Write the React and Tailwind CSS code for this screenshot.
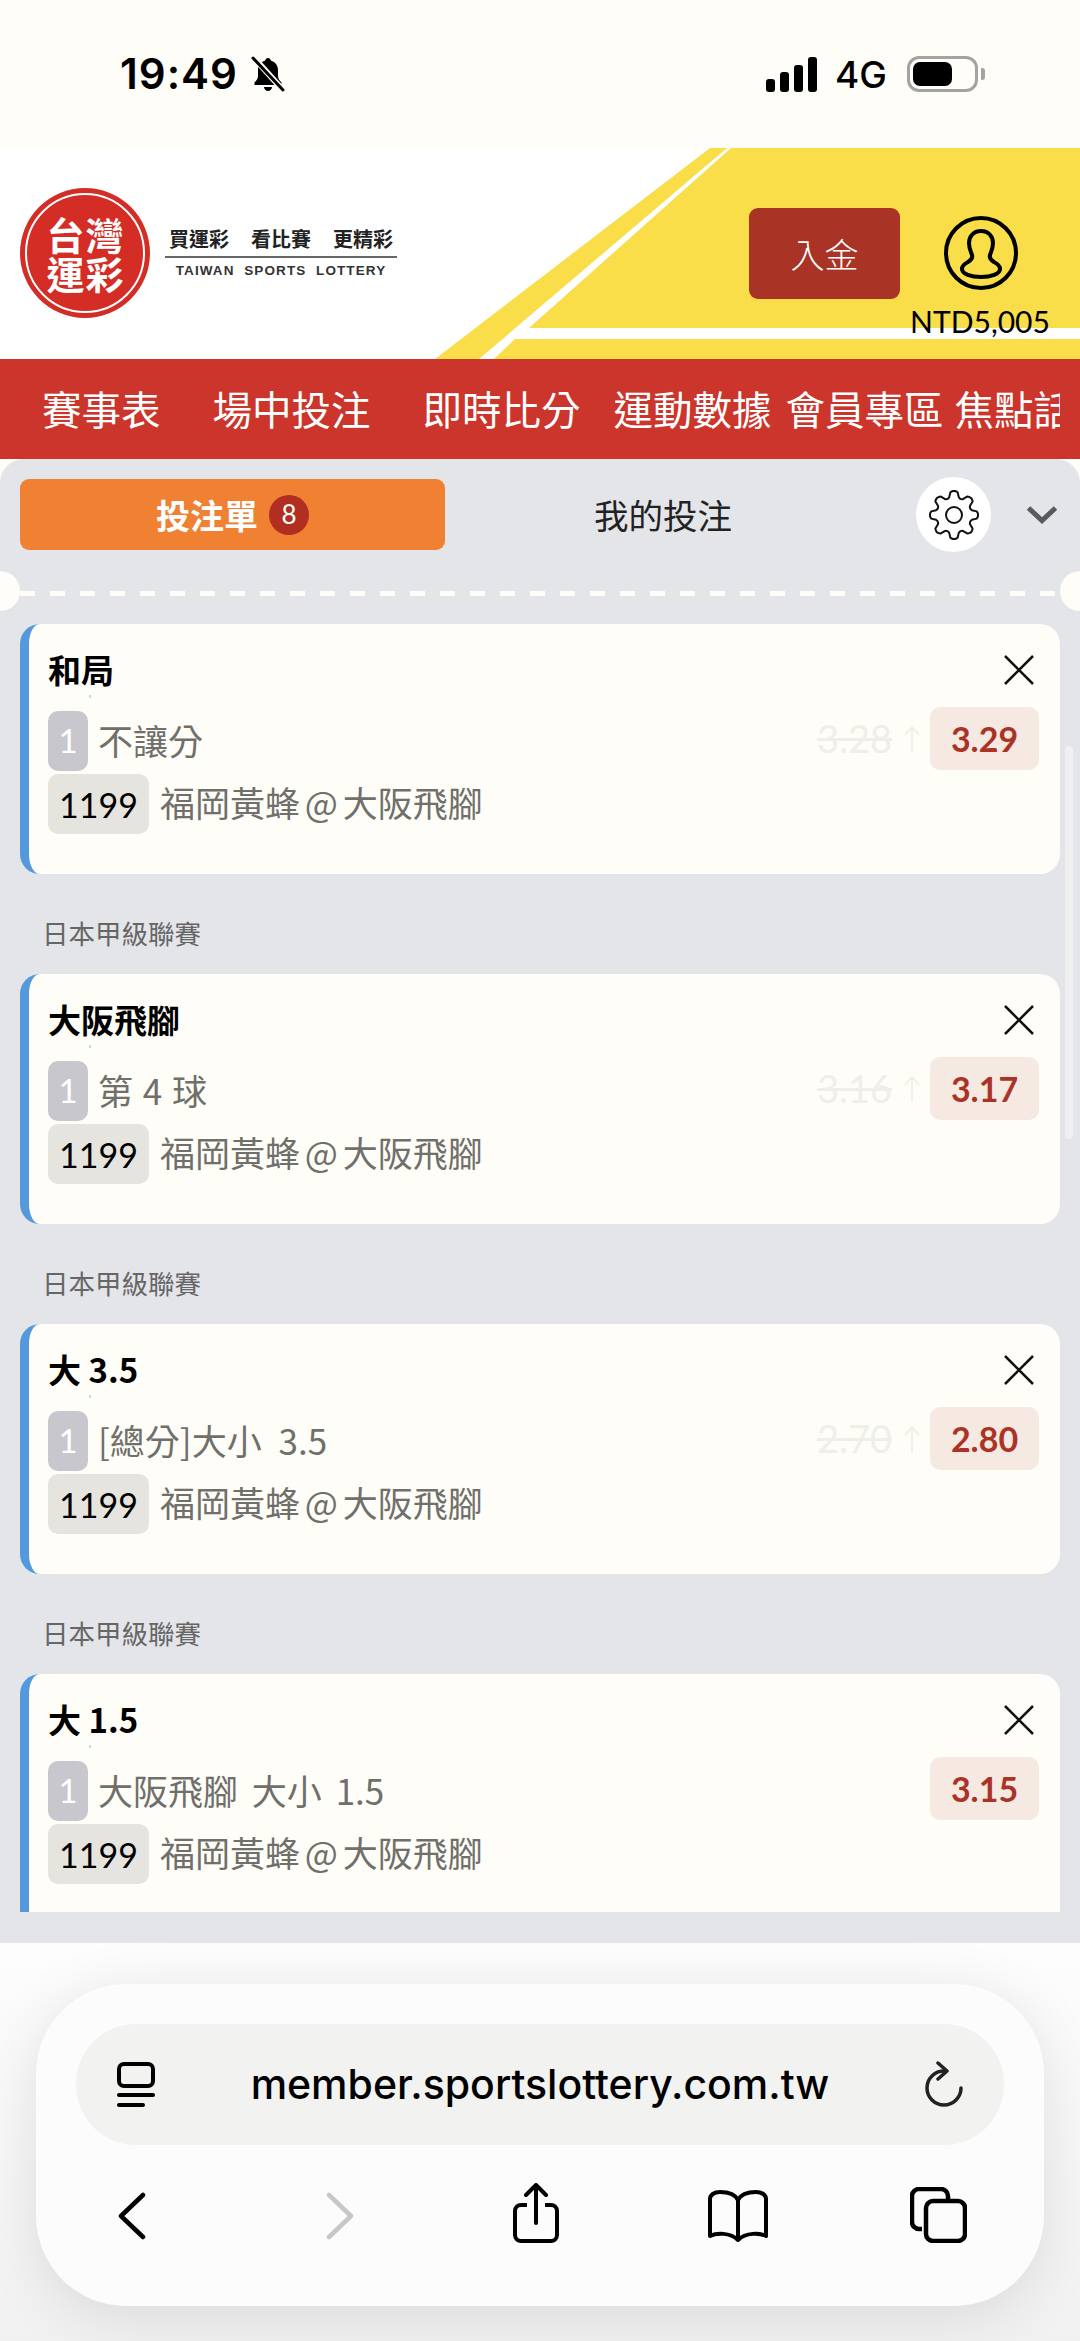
import { ChevronDown } from 'lucide-react';

const cards = [
    { title: '和局', label: '不讓分', oldOdds: '3.28', odds: '3.29', spacing: '' },
    { title: '大阪飛腳', label: '第 4 球', oldOdds: '3.16', odds: '3.17', spacing: '[word-spacing:2px]' },
    { title: '大 3.5', label: '[總分]大小 3.5', oldOdds: '2.70', odds: '2.80', spacing: '[word-spacing:9px]' },
    { title: '大 1.5', label: '大阪飛腳 大小 1.5', odds: '3.15', spacing: '[word-spacing:6px]' },
];

// 8 rounded teeth, same shape as the gear in the bet slip
const polar = (deg, r) => {
    const a = (deg * Math.PI) / 180;
    return `${(25 + r * Math.sin(a)).toFixed(2)} ${(25 - r * Math.cos(a)).toFixed(2)}`;
};
const gearPath = Array.from({ length: 8 }, (_, i) => {
    const t = i * 45;
    return `${i === 0 ? 'M' : 'L'}${polar(t - 15, 18.500)}L${polar(t - 9, 23)}Q${polar(t, 25.500)} ${polar(t + 9, 23)}L${polar(t + 15, 18.500)}Q${polar(t + 22.500, 16.500)} ${polar(t + 30, 18.500)}`;
}).join('') + 'Z';

const StatusBar = () => (
    <div className="h-[148px] shrink-0 relative flex items-center font-[Inter,sans-serif]">
        <div className="flex items-center ml-[120px]">
            <span className="text-[42px] leading-none font-semibold tracking-[1px] text-black">19:49</span>
            <svg width="36" height="38" viewBox="0 0 36 36" className="ml-[12px]">
                <path d="M18 2c1.600 0 2.600 1 2.800 2.400C25.500 5.800 28 9.500 28 14v6c0 2.500 1.500 4.500 3.500 6.500V29h-27v-2.500C6.500 24.500 8 22.500 8 20v-6c0-4.500 2.500-8.200 7.200-9.600C15.400 3 16.400 2 18 2z" fill="#000" />
                <path d="M14 31h8c0 2.200-1.800 4-4 4s-4-1.800-4-4z" fill="#000" />
                <path d="M5 3l27 30" stroke="#fffdf7" strokeWidth="6" />
                <path d="M3 2l30 32" stroke="#000" strokeWidth="3" strokeLinecap="round" />
            </svg>
        </div>
        <div className="ml-auto mr-[95px] flex items-center">
            <div className="flex items-end gap-[5px] h-[35px]">
                <div className="w-[9px] h-[13px] rounded-[3px] bg-black" />
                <div className="w-[9px] h-[20px] rounded-[3px] bg-black" />
                <div className="w-[9px] h-[27px] rounded-[3px] bg-black" />
                <div className="w-[9px] h-[35px] rounded-[3px] bg-black" />
            </div>
            <span className="ml-[18px] text-[37px] leading-none font-medium text-black">4G</span>
            <div className="ml-[20px] w-[71px] h-[36px] rounded-[12px] border-[3px] border-[#a3a3a3] p-[3px]">
                <div className="w-[39px] h-full rounded-[7px] bg-black" />
            </div>
            <div className="ml-[3px] w-[4px] h-[12px] rounded-r-[3px] bg-[#a3a3a3]" />
        </div>
    </div>
);

const Logo = () => (
    <div className="flex items-center">
        <div className="w-[130px] h-[130px] rounded-full bg-[#d32d26] p-[5px] shrink-0">
            <div className="w-full h-full rounded-full border-2 border-white grid grid-cols-[39px_39px] content-center justify-center text-white font-bold text-[38px] leading-[39px] text-center">
                <span>台</span>
                <span>灣</span>
                <span>運</span>
                <span>彩</span>
            </div>
        </div>
        <div className="ml-[15px] w-[232px] flex flex-col items-center">
            <div className="text-[20px] leading-[24px] font-bold text-[#222] flex gap-[22px]">
                <span>買運彩</span>
                <span>看比賽</span>
                <span>更精彩</span>
            </div>
            <div className="w-full h-[2px] bg-[#666] mt-[5px]" />
            <div className="mt-[5px] text-[13.500px] leading-[16px] font-bold text-[#333] tracking-[1.100px] whitespace-pre font-['Liberation_Sans',sans-serif]">TAIWAN  SPORTS  LOTTERY</div>
        </div>
    </div>
);

const Header = () => (
    <div className="h-[211px] shrink-0 relative bg-white overflow-hidden flex items-center">
        <svg className="absolute inset-0" width="1080" height="211" viewBox="0 0 1080 211">
            <path d="M710 0H727L479 211H435z" fill="#f9dd49" />
            <path d="M731 0H1080V180H529z" fill="#f9dd49" />
            <path d="M515 191H1080V211H494z" fill="#f9dd49" />
        </svg>
        <div className="relative ml-[20px] -mt-[1px]">
            <Logo />
        </div>
        <div className="absolute left-[749px] top-[60px] w-[151px] h-[91px] rounded-[9px] bg-[#a93324] flex items-center justify-center text-white text-[34px] font-light">
            入金
        </div>
        <div className="absolute left-[906px] top-[68px] w-[150px] flex flex-col items-center">
            <svg width="74" height="74" viewBox="0 0 74 74" fill="none" stroke="#000" strokeWidth="4">
                <circle cx="37" cy="37" r="35" />
                <path d="M37 15c-8 0-12 6-12 12 0 6 2 9 3 12 1 3-1 5-4 7-4 2-6 4-6 7 0 5 9 8 19 8s19-3 19-8c0-3-2-5-6-7-3-2-5-4-4-7 1-3 3-6 3-12 0-6-4-12-12-12z" />
            </svg>
            <span className="mt-[15px] -ml-[2px] text-[30px] leading-[32px] text-black font-[Lato,sans-serif]">NTD5,005</span>
        </div>
    </div>
);

const Nav = () => (
    <div className="h-[100px] shrink-0 bg-[#cb352b] pb-[3px] pl-[42px]">
        <div className="w-[1018px] h-full overflow-hidden flex items-center whitespace-nowrap text-white text-[39.500px]">
            <span>賽事表</span>
            <span className="ml-[52px]">場中投注</span>
            <span className="ml-[52px]">即時比分</span>
            <span className="ml-[33px]">運動數據</span>
            <span className="ml-[14px]">會員專區</span>
            <span className="ml-[11px]">焦點話題</span>
        </div>
    </div>
);

const Tabs = () => (
    <div className="h-[71px] flex items-center pl-[20px]">
        <div className="w-[425px] h-full rounded-[9px] bg-[#f08132] flex items-center justify-center gap-[11px] text-white font-semibold text-[34px]">
            <span>投注單</span>
            <span className="w-[40px] h-[40px] rounded-full bg-[#b22e20] flex items-center justify-center text-[26px] font-normal font-[Lato,sans-serif]">8</span>
        </div>
        <div className="w-[436px] text-center text-[34.500px] text-[#222]">我的投注</div>
        <div className="ml-[35px] w-[75px] h-[75px] rounded-full bg-white flex items-center justify-center">
            <svg width="50" height="50" viewBox="0 0 50 50" fill="none" stroke="#111" strokeWidth="2" strokeLinejoin="round">
                <path d={gearPath} />
                <circle cx="25" cy="25" r="8" />
            </svg>
        </div>
        <svg width="30" height="18" viewBox="0 0 30 18" fill="none" stroke="#5a5a5a" strokeWidth="5" className="ml-[36px]">
            <path d="M1.500 2L15 14.500 28.500 2" />
        </svg>
    </div>
);

const Divider = () => (
    <div className="relative h-[40px] mt-[21px] flex items-center">
        <div className="absolute left-[-20px] top-0 w-[40px] h-[40px] rounded-full bg-[#fffdf7]" />
        <div className="absolute right-[-20px] top-0 w-[40px] h-[40px] rounded-full bg-[#fffdf7]" />
        <div className="absolute left-[20px] right-[20px] top-[20px] h-[5px] bg-[repeating-linear-gradient(90deg,#fffdf7_0_15px,transparent_15px_30px)]" />
    </div>
);

const BetCard = ({ card, last }) => (
    <div className={`relative mx-[20px] bg-[#fffdf7] border-l-[9px] border-[#5499dc] pl-[19px] pr-[21px] pt-[26px] ${last ? 'h-[238px] rounded-t-[20px] shrink-0' : 'h-[250px] rounded-[20px] shrink-0'}`}>
        <div className="h-[40px] flex items-center justify-between">
            <span className="text-[33px] font-bold text-black">{card.title}</span>
            <svg width="30" height="30" viewBox="0 0 30 30" className="mr-[5px]">
                <path d="M1 1l28 28M29 1L1 29" stroke="#111" strokeWidth="2.500" />
            </svg>
        </div>
        <div className="absolute left-[60px] top-[71px] w-[2px] h-[3px] bg-[#bcdcf5]" />
        <div className="mt-[17px] h-[63px] flex items-center">
            <span className="w-[40px] h-[60px] mt-[5px] rounded-[10px] bg-[#c7c7cd] text-white text-[33px] flex items-center justify-center shrink-0 font-[Lato,sans-serif]">1</span>
            <span className={`ml-[10px] text-[35px] text-[#6f6f6b] mt-[4px] ${card.spacing}`}>{card.label}</span>
            <div className="ml-auto flex items-center">
                {card.oldOdds && (
                    <>
                        <span className="text-[38px] text-[#efefea] line-through font-[Lato,sans-serif]">{card.oldOdds}</span>
                        <svg width="20" height="26" viewBox="0 0 20 26" className="ml-[10px] mr-[8px]" fill="none" stroke="#edf2e8" strokeWidth="2">
                            <path d="M10 26V1M3 9l7-8 7 8" />
                        </svg>
                    </>
                )}
                <span className="w-[109px] h-[63px] rounded-[10px] bg-[#f5e9e2] text-[#ab3326] font-bold text-[34px] flex items-center justify-center font-[Lato,sans-serif]">{card.odds}</span>
            </div>
        </div>
        <div className="mt-[4px] h-[60px] flex items-center">
            <span className="w-[101px] h-[60px] rounded-[10px] bg-[#e6e4df] text-black text-[34px] flex items-center justify-center shrink-0 font-[Lato,sans-serif]">1199</span>
            <span className="ml-[11px] -mt-[3px] text-[35px] text-[#6f6f6b] whitespace-nowrap [word-spacing:-3px]">福岡黃蜂 @ 大阪飛腳</span>
        </div>
    </div>
);

const BetList = () => (
    <div className="mt-[13px] flex flex-col relative">
        {cards.map((card, i) => (
            <div key={i} className="flex flex-col">
                <BetCard card={card} last={i === cards.length - 1} />
                {i < cards.length - 1 && (
                    <div className="h-[100px] pl-[42px] pt-[40px] text-[26.500px] leading-[38px] text-[#666]">日本甲級聯賽</div>
                )}
            </div>
        ))}
        <div className="absolute right-[7px] top-[122px] h-[393px] w-[8px] rounded-full bg-[#f0f0f0]" />
    </div>
);

const Panel = () => (
    <div className="h-[1484px] shrink-0 rounded-t-[24px] bg-[#e4e5e8] pt-[20px] overflow-hidden">
        <Tabs />
        <Divider />
        <BetList />
    </div>
);

const SafariBar = () => (
    <div className="flex-1 bg-gradient-to-b from-[#fdfdfd] to-[#f1f1f1] px-[36px] pt-[41px] font-[Inter,sans-serif]">
        <div className="h-[322px] rounded-[90px] bg-[#fcfcfc] shadow-[0_10px_60px_rgba(0,0,0,0.1)] px-[40px] pt-[40px]">
            <div className="h-[121px] rounded-[60px] bg-[#f2f2f0] flex items-center pl-[41px] pr-[41px]">
                <svg width="38" height="46" viewBox="0 0 38 46" fill="none" stroke="#000" strokeWidth="4">
                    <rect x="2" y="2" width="34" height="22" rx="5" />
                    <path d="M2 33H36" strokeLinecap="round" />
                    <path d="M2 43H26" strokeLinecap="round" />
                </svg>
                <span className="flex-1 text-center text-[41px] font-medium text-black">member.sportslottery.com.tw</span>
                <svg width="38" height="48" viewBox="0 0 38 48" fill="none" stroke="#222" strokeWidth="3.500" strokeLinecap="round" strokeLinejoin="round">
                    <path d="M19 10A17 17 0 1 0 36 27" />
                    <path d="M13 2l9 8-9 8" />
                </svg>
            </div>
            <div className="mt-[38px] h-[60px] flex items-end pl-[42px]">
                <svg width="28" height="48" viewBox="0 0 28 48" fill="none" stroke="#000" strokeWidth="4.500" strokeLinecap="round" strokeLinejoin="round" className="mb-[3px]">
                    <path d="M25 3L3 24l22 21" />
                </svg>
                <svg width="28" height="48" viewBox="0 0 28 48" fill="none" stroke="#c7c7c7" strokeWidth="4.500" strokeLinecap="round" strokeLinejoin="round" className="ml-[180px] mb-[3px]">
                    <path d="M3 3l22 21L3 45" />
                </svg>
                <svg width="46" height="60" viewBox="0 0 46 60" fill="none" stroke="#000" strokeWidth="4" className="ml-[159px]">
                    <path d="M14 22H8a6 6 0 0 0-6 6v24a6 6 0 0 0 6 6h30a6 6 0 0 0 6-6V28a6 6 0 0 0-6-6h-6" />
                    <path d="M23 40V3M13 12l10-10 10 10" strokeLinecap="round" strokeLinejoin="round" />
                </svg>
                <svg width="60" height="52" viewBox="0 0 60 52" fill="none" stroke="#000" strokeWidth="4" strokeLinejoin="round" className="ml-[149px] mb-[1px]">
                    <path d="M30 10C27 4 20 2 12 2 6 2 2 5 2 9v37c6-3 20-4 28 4 8-8 22-7 28-4V9c0-4-4-7-10-7-8 0-15 2-18 8zM30 10v40" />
                </svg>
                <svg width="57" height="56" viewBox="0 0 57 56" fill="none" stroke="#000" strokeWidth="4.500" className="ml-[142px]">
                    <path d="M12 42H9a7 7 0 0 1-7-7V9a7 7 0 0 1 7-7h22a7 7 0 0 1 7 7v3" />
                    <rect x="16" y="14" width="39" height="40" rx="7" />
                </svg>
            </div>
        </div>
    </div>
);

const App = () => {
    return (
        <div className="w-[1080px] h-[2341px] flex flex-col overflow-hidden bg-[#fffdf7] font-['Noto_Sans_CJK_TC',sans-serif]">
            <StatusBar />
            <Header />
            <Nav />
            <Panel />
            <SafariBar />
        </div>
    );
};

export default App;
